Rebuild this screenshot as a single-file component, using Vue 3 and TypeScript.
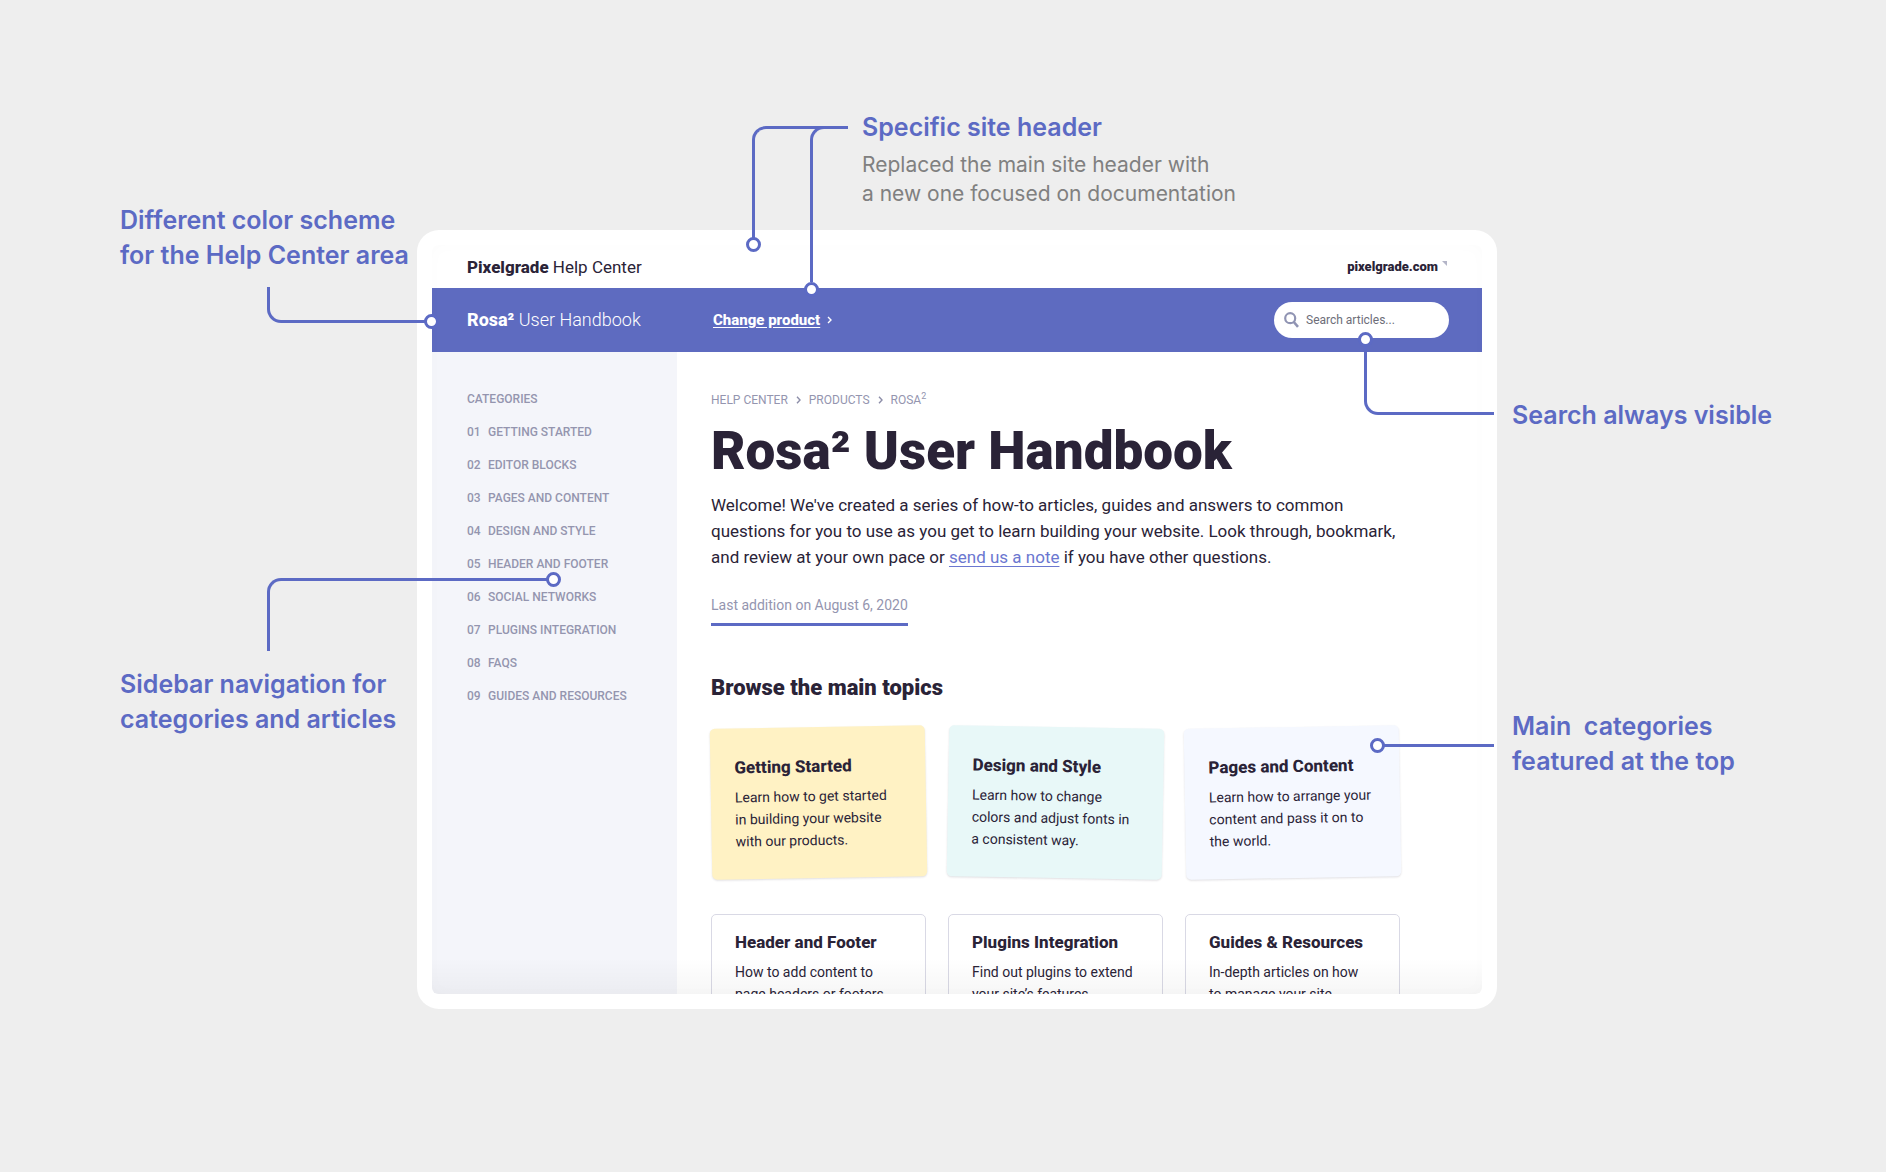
<script setup lang="ts">
interface Topic {
  title: string
  text: string
  tone: string
}

const categories: string[] = [
  'Getting started',
  'Editor blocks',
  'Pages and content',
  'Design and style',
  'Header and footer',
  'Social networks',
  'Plugins integration',
  'FAQs',
  'Guides and resources',
]

const topics: Topic[] = [
  { title: 'Getting Started', text: 'Learn how to get started in building your website with our products.', tone: 'yellow' },
  { title: 'Design and Style', text: 'Learn how to change colors and adjust fonts in a consistent way.', tone: 'teal' },
  { title: 'Pages and Content', text: 'Learn how to arrange your content and pass it on to the world.', tone: 'lilac' },
  { title: 'Header and Footer', text: 'How to add content to page headers or footers.', tone: 'plain' },
  { title: 'Plugins Integration', text: 'Find out plugins to extend your site’s features.', tone: 'plain' },
  { title: 'Guides & Resources', text: 'In-depth articles on how to manage your site.', tone: 'plain' },
]

const pad = (n: number): string => String(n).padStart(2, '0')
</script>

<template>
  <div class="stage">
    <aside class="notes notes-left">
      <p class="note">Different color scheme<br />for the Help Center area</p>
      <p class="note">Sidebar navigation for<br />categories and articles</p>
    </aside>

    <div class="center">
      <div class="lead">
        <p class="note">Specific site header</p>
        <p class="lead-text">Replaced the main site header with<br />a new one focused on documentation</p>
      </div>

      <div class="frame">
        <div class="screen">
          <header class="site-header">
            <a class="brand" href="#"><b>Pixelgrade</b> Help Center</a>
            <a class="site-link" href="#">
              pixelgrade.com
              <svg width="5" height="5" viewBox="0 0 5 5" aria-hidden="true"><path d="M0 0H5V5Z" fill="#b4b5c8" /></svg>
            </a>
          </header>

          <div class="bar">
            <a class="product" href="#"><b>Rosa²</b> User Handbook</a>
            <a class="change" href="#">
              <span>Change product</span>
              <svg width="5" height="8" viewBox="0 0 5 8" aria-hidden="true"><path d="M1 1L4 4L1 7" fill="none" stroke="#fff" stroke-width="1.4" /></svg>
            </a>
            <label class="search">
              <svg width="15" height="16" viewBox="0 0 15 16" aria-hidden="true">
                <circle cx="6.2" cy="6.2" r="5" fill="none" stroke="#9094b3" stroke-width="2.2" />
                <path d="M9.8 10L14 14.8" stroke="#9094b3" stroke-width="2.6" />
              </svg>
              <input type="text" placeholder="Search articles..." aria-label="Search articles" />
            </label>
          </div>

          <div class="body">
            <nav class="sidebar" aria-label="Categories">
              <p class="side-title">Categories</p>
              <a v-for="(name, i) in categories" :key="name" class="side-link" href="#">
                <span class="num">{{ pad(i + 1) }}</span>{{ name }}
              </a>
            </nav>

            <main class="content">
              <nav class="crumbs" aria-label="Breadcrumb">
                <a href="#">Help Center</a>
                <svg width="5" height="8" viewBox="0 0 5 8" aria-hidden="true"><path d="M1 0.8L4 4L1 7.2" fill="none" stroke="#8d8ea9" stroke-width="1.4" /></svg>
                <a href="#">Products</a>
                <svg width="5" height="8" viewBox="0 0 5 8" aria-hidden="true"><path d="M1 0.8L4 4L1 7.2" fill="none" stroke="#8d8ea9" stroke-width="1.4" /></svg>
                <a href="#">Rosa<sup>2</sup></a>
              </nav>
              <h1>Rosa² User Handbook</h1>
              <p class="intro">
                Welcome! We've created a series of how-to articles, guides and answers to common<br />
                questions for you to use as you get to learn building your website. Look through, bookmark,<br />
                and review at your own pace or <a href="#">send us a note</a> if you have other questions.
              </p>
              <p class="updated">Last addition on August 6, 2020</p>

              <h2>Browse the main topics</h2>
              <div class="topics">
                <article v-for="t in topics" :key="t.title" class="card" :class="t.tone">
                  <h3>{{ t.title }}</h3>
                  <p>{{ t.text }}</p>
                </article>
              </div>
            </main>
          </div>
        </div>

        <i class="wire wire-scheme"></i>
        <i class="dot dot-scheme"></i>
        <i class="wire wire-header-a"></i>
        <i class="dot dot-header-a"></i>
        <i class="wire wire-header-b"></i>
        <i class="dot dot-header-b"></i>
        <i class="wire wire-search"></i>
        <i class="dot dot-search"></i>
        <i class="wire wire-topics"></i>
        <i class="dot dot-topics"></i>
        <i class="wire wire-sidebar"></i>
        <i class="dot dot-sidebar"></i>
      </div>
    </div>

    <aside class="notes notes-right">
      <p class="note">Search always visible</p>
      <p class="note">Main&nbsp; categories<br />featured at the top</p>
    </aside>
  </div>
</template>

<style>
body {
  margin: 0;
  background: #eeeeee;
}
</style>

<style scoped>
* {
  box-sizing: border-box;
}

p,
h1,
h2,
h3 {
  margin: 0;
}

a {
  color: inherit;
  text-decoration: none;
}

.stage {
  display: grid;
  grid-template-columns: 297fr 1080fr 389fr;
  min-height: 100vh;
  padding: 110px 0 110px 120px;
  overflow: hidden;
  background: #eeeeee;
  font-family: Inter, "Liberation Sans", sans-serif;
}

.notes {
  display: flex;
  flex-direction: column;
}

.notes-left {
  gap: 394px;
  padding-top: 93px;
}

.notes-right {
  gap: 276px;
  padding-top: 288px;
  padding-left: 15px;
}

.note {
  color: #5c6ac4;
  font-size: 25px;
  font-weight: 600;
  line-height: 35px;
  white-space: nowrap;
}

.lead {
  padding-left: 445px;
  margin-bottom: 22px;
}

.lead-text {
  margin-top: 5px;
  color: #808080;
  font-size: 21px;
  line-height: 29px;
  white-space: nowrap;
}

.frame {
  position: relative;
  padding: 15px;
  border-radius: 22px;
  background: #fff;
}

.screen {
  position: relative;
  max-height: 749px;
  overflow: hidden;
  border-radius: 6px;
  color: #2a2337;
  font-family: Roboto, "Open Sans", sans-serif;
}

.screen::after {
  content: "";
  position: absolute;
  inset: 0;
  border-radius: 6px;
  background: linear-gradient(to top, rgba(0, 0, 0, 0.035), rgba(0, 0, 0, 0) 36px);
  box-shadow: inset 0 0 16px rgba(0, 0, 0, 0.015);
  pointer-events: none;
}

.site-header {
  display: flex;
  align-items: center;
  justify-content: space-between;
  height: 43px;
  padding: 0 35px;
}

.brand,
.product {
  font-size: 17px;
  line-height: 24px;
}

.brand b,
.product b {
  font-weight: 800;
}

.site-link {
  display: flex;
  gap: 4px;
  font-size: 13px;
  font-weight: 900;
  line-height: 16px;
}

.site-link svg {
  margin-top: 2px;
}

.bar {
  display: flex;
  align-items: center;
  height: 64px;
  padding: 0 33px 0 35px;
  background: #5e6bc0;
  color: #fff;
}

.product {
  width: 246px;
  font-size: 18px;
  font-weight: 300;
}

.change {
  display: flex;
  align-items: center;
  gap: 7px;
  font-size: 15px;
  font-weight: 800;
  line-height: 20px;
}

.change span {
  text-decoration: underline;
  text-underline-offset: 2px;
}

.search {
  display: flex;
  align-items: center;
  gap: 7px;
  width: 175px;
  height: 36px;
  margin-left: auto;
  padding: 0 10px;
  border-radius: 18px;
  background: #fff;
}

.search svg {
  flex: none;
}

.search input {
  width: 100%;
  min-width: 0;
  padding: 0;
  border: 0;
  outline: 0;
  background: none;
  font-family: inherit;
  font-size: 12px;
}

.search input::placeholder {
  color: #6d6d78;
}

.body {
  display: flex;
  min-height: 642px;
}

.sidebar {
  flex: none;
  width: 245px;
  padding: 31px 0 0 35px;
  background: #f4f5fa;
  color: #9495af;
  font-size: 12px;
  font-weight: 500;
  line-height: 33px;
  text-transform: uppercase;
}

.side-link {
  display: flex;
}

.num {
  width: 21px;
}

.content {
  flex: 1;
  min-width: 0;
  padding: 40px 82px 0 34px;
}

.crumbs {
  display: flex;
  align-items: center;
  gap: 8px;
  color: #9495af;
  font-size: 12px;
  line-height: 16px;
  text-transform: uppercase;
}

.crumbs sup {
  font-size: 9px;
  line-height: 0;
}

h1 {
  margin-top: 11px;
  font-size: 53px;
  font-weight: 900;
  line-height: 64px;
  white-space: nowrap;
}

.intro {
  margin-top: 9px;
  font-size: 17px;
  line-height: 26px;
  white-space: nowrap;
}

.intro a {
  color: #6b77d0;
  text-decoration: underline;
  text-underline-offset: 3px;
}

.updated {
  width: fit-content;
  margin-top: 23px;
  padding-bottom: 6px;
  border-bottom: 3px solid #5c6ac4;
  color: #9495af;
  font-size: 14px;
  line-height: 24px;
}

h2 {
  margin-top: 46px;
  font-size: 22px;
  font-weight: 900;
  line-height: 32px;
}

.topics {
  display: grid;
  grid-template-columns: repeat(3, 1fr);
  gap: 36px 22px;
  margin-top: 23px;
}

.card {
  padding: 27px 27px 27px 24px;
  border-radius: 5px;
}

.card h3 {
  font-size: 17px;
  font-weight: 800;
  line-height: 24px;
  white-space: nowrap;
}

.card p {
  margin-top: 7px;
  font-size: 14px;
  line-height: 22px;
}

.yellow,
.teal,
.lilac {
  box-shadow: 0 1px 2px rgba(42, 35, 55, 0.14);
}

.yellow {
  background: #fff2c4;
  transform: rotate(-1deg);
}

.teal {
  background: #e8f8f8;
  transform: rotate(1deg);
}

.lilac {
  background: #f5f8ff;
  transform: rotate(-1deg);
}

.plain {
  padding: 15px 26px 15px 23px;
  border: 1px solid #d9d9e5;
}

/* Callout connectors */
.wire,
.dot {
  position: absolute;
}

.wire {
  border: 0 solid #5c6ac4;
}

.dot {
  width: 15px;
  height: 15px;
  border: 3px solid #5c6ac4;
  border-radius: 50%;
  background: #fff;
}

.wire-scheme {
  top: 57px;
  left: -150px;
  width: 160px;
  height: 36px;
  border-width: 0 0 3px 3px;
  border-bottom-left-radius: 14px;
}

.dot-scheme {
  top: 84px;
  left: 7px;
}

.wire-header-a {
  top: -104px;
  left: 335px;
  width: 96px;
  height: 112px;
  border-width: 3px 0 0 3px;
  border-top-left-radius: 14px;
}

.dot-header-a {
  top: 7px;
  left: 329px;
}

.wire-header-b {
  top: -104px;
  left: 393px;
  width: 38px;
  height: 156px;
  border-width: 3px 0 0 3px;
  border-top-left-radius: 14px;
}

.dot-header-b {
  top: 52px;
  left: 387px;
}

.wire-search {
  top: 112px;
  right: 3px;
  width: 130px;
  height: 73px;
  border-width: 0 0 3px 3px;
  border-bottom-left-radius: 14px;
}

.dot-search {
  top: 102px;
  right: 124px;
}

.wire-topics {
  top: 514px;
  right: 3px;
  width: 112px;
  border-width: 3px 0 0 0;
}

.dot-topics {
  top: 508px;
  right: 112px;
}

.wire-sidebar {
  top: 348px;
  left: -150px;
  width: 280px;
  height: 73px;
  border-width: 3px 0 0 3px;
  border-top-left-radius: 14px;
}

.dot-sidebar {
  top: 342px;
  left: 129px;
}
</style>
